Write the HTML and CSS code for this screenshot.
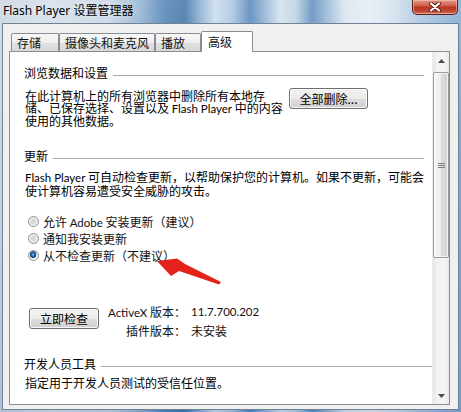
FILE: index.html
```html
<!DOCTYPE html>
<html lang="zh-CN">
<head>
<meta charset="utf-8">
<title>Flash Player 设置管理器</title>
<link rel="stylesheet" href="styles.css">
</head>
<body>
<div class="window">
  <div class="titlebar">
    <span class="title">Flash Player 设置管理器</span>
    <button class="close" aria-label="关闭">
      <svg width="14" height="10" viewBox="0 0 14 10">
        <path d="M3 1.5 L11 8.5 M11 1.5 L3 8.5" stroke="#5a1e16" stroke-width="4" stroke-linecap="round"/>
        <path d="M3 1.5 L11 8.5 M11 1.5 L3 8.5" stroke="#ffffff" stroke-width="2.2" stroke-linecap="round"/>
      </svg>
    </button>
  </div>

  <div class="client">
    <div class="tabs">
      <div class="tab tab-first">存储</div>
      <div class="tab">摄像头和麦克风</div>
      <div class="tab">播放</div>
      <div class="tab active">高级</div>
    </div>

    <div class="panel">
      <div class="content">
        <div class="group-title">浏览数据和设置</div>
        <div class="row">
          <p class="para para-narrow">在此计算机上的所有浏览器中删除所有本地存<br>储、已保存选择、设置以及 <span class="latin">Flash Player</span> 中的内容<br>使用的其他数据。</p>
          <button class="btn btn-wide">全部删除...</button>
        </div>

        <div class="group-title gap-top">更新</div>
        <p class="para para-update"><span class="latin">Flash Player</span> 可自动检查更新，以帮助保护您的计算机。如果不更新，可能会<br>使计算机容易遭受安全威胁的攻击。</p>

        <div class="radios">
          <label class="radio-row"><span class="radio"></span><span>允许 <span class="latin">Adobe</span> 安装更新（建议）</span></label>
          <label class="radio-row"><span class="radio"></span><span>通知我安装更新</span></label>
          <label class="radio-row"><span class="radio checked"></span><span>从不检查更新（不建议）</span></label>
        </div>

        <div class="check">
          <button class="btn btn-check">立即检查</button>
          <div class="versions">
            <span class="label"><span class="latin">ActiveX</span> 版本：</span><span class="latin">11.7.700.202</span>
            <span class="label">插件版本：</span><span>未安装</span>
          </div>
        </div>

        <div class="group-title wide dev-title">开发人员工具</div>
        <p class="para dev-text">指定用于开发人员测试的受信任位置。</p>
      </div>

      <div class="scrollbar">
        <div class="sb-btn">
          <svg width="7" height="4" viewBox="0 0 7 4"><polygon points="3.5,0 7,4 0,4" fill="#4a4a4a"/></svg>
        </div>
        <div class="sb-track">
          <div class="thumb"><span class="grip"></span></div>
        </div>
        <div class="sb-btn">
          <svg width="7" height="4" viewBox="0 0 7 4"><polygon points="0,0 7,0 3.5,4" fill="#4a4a4a"/></svg>
        </div>
      </div>
    </div>
  </div>

  <!-- annotation arrow pointing at the selected option -->
  <svg class="pointer" width="75" height="36" viewBox="0 0 75 36">
    <polygon points="7,9 27,6.5 35,12 71,30 69,32.5 29,19 21,24" fill="#e3221c"/>
  </svg>
</div>
</body>
</html>
```

FILE: styles.css
```css
* {
  box-sizing: border-box;
}

html, body {
  margin: 0;
  padding: 0;
}

body {
  width: 461px;
  height: 412px;
  overflow: hidden;
  font-family: "Noto Sans CJK SC", sans-serif;
  font-size: 12px;
  color: #111;
}

/* Latin runs inside Chinese text use a narrower UI face */
.latin {
  font-family: "Lato", "Noto Sans", sans-serif;
  font-size: 11.5px;
}

/* Aero-style glass frame */
.window {
  position: relative;
  width: 461px;
  height: 412px;
  display: flex;
  flex-direction: column;
  background:
    linear-gradient(180deg, rgba(255,255,255,0.18), rgba(255,255,255,0) 40%, rgba(40,90,150,0.15)),
    linear-gradient(90deg,
      #c6d4e2 0px, #d3dde8 50px, #c4d3e2 110px, #8eb0d0 140px,
      #4a7db2 165px, #3d6fa4 185px, #86acd0 200px, #c9dcec 215px,
      #a6c3de 232px, #4f82b8 250px, #7fa6cd 262px, #d2e0ec 280px,
      #b8cee2 296px, #5888bb 312px, #8fb1d3 326px, #d8e5f0 345px,
      #e4ecf4 370px, #cfdeec 395px, #a7c3de 420px, #7ea6cf 461px);
}

.titlebar {
  height: 23px;
  display: flex;
  align-items: flex-start;
  padding: 0 3px;
}

.title {
  font-family: "Noto Sans", "Noto Sans CJK SC", sans-serif;
  font-size: 12px;
  line-height: 22px;
  color: #000;
  text-shadow: 0 0 6px rgba(255,255,255,0.7);
}

.close {
  margin-left: auto;
  width: 46px;
  height: 15px;
  padding: 0;
  border: 1px solid #5b2219;
  border-top: none;
  border-radius: 0 0 5px 5px;
  background: linear-gradient(180deg, #e3998a 0%, #d0634d 40%, #b93722 50%, #c0462f 80%, #d27a64 100%);
  box-shadow: inset 0 0 0 1px rgba(255,220,210,0.45);
  display: flex;
  align-items: center;
  justify-content: center;
}

.close svg {
  display: block;
}

/* light client surface holding the tab control */
.client {
  flex: 1;
  margin: 0 2px 2px 2px;
  border: 1px solid #6f8296;
  background: #f0f0f0;
  display: flex;
  flex-direction: column;
  padding: 7px 8px 0 6px;
}

.tabs {
  display: flex;
  align-items: flex-end;
  height: 20px;
  padding-left: 2px;
}

.tab {
  height: 18px;
  min-width: 46px;
  padding: 1px 5px 0 5px;
  line-height: 16px;
  border: 1px solid #898c95;
  border-bottom: none;
  border-radius: 2px 2px 0 0;
  background: linear-gradient(180deg, #f8f8f8 0%, #eeeeee 50%, #e0e0e0 51%, #d9d9d9 100%);
  white-space: nowrap;
}

.tab-first {
  min-width: 48px;
}

.tab.active {
  position: relative;
  z-index: 1;
  height: 21px;
  min-width: 52px;
  margin-bottom: -1px;
  padding: 2px 5px 0 6px;
  background: #fff;
}

.panel {
  height: 354px;
  border: 1px solid #898c95;
  background: #fff;
  display: flex;
}

.content {
  flex: 1;
  padding: 13px 8px 0 14px;
  white-space: nowrap;
}

.group-title {
  display: flex;
  align-items: center;
  gap: 5px;
  height: 16px;
  line-height: 16px;
  color: #000;
}

.group-title::after {
  content: "";
  flex: 1;
  margin-top: 4px;
  border-top: 1px solid #a8a8a8;
}

.group-title.wide {
  margin-right: -8px;
}

.gap-top {
  margin-top: 21px;
}

.para {
  margin: 0;
  padding-left: 1px;
  line-height: 12px;
  color: #000;
}

.row {
  display: flex;
  align-items: flex-start;
  gap: 8px;
  margin-top: 7px;
}

.para-narrow {
  width: 257px;
  margin-top: 2px;
}

.para-update {
  margin-top: 7px;
  line-height: 12.5px;
}

.btn {
  height: 21px;
  padding: 0;
  border: 1px solid #707070;
  border-radius: 3px;
  background: linear-gradient(180deg, #f2f2f2 0%, #ebebeb 50%, #dddddd 51%, #cfcfcf 100%);
  box-shadow: inset 0 0 0 1px rgba(255,255,255,0.8);
  font-family: inherit;
  font-size: 12px;
  line-height: 18px;
  color: #000;
  text-align: center;
}

.btn-wide {
  width: 79px;
  flex: none;
}

.btn-check {
  width: 70px;
  margin: 5px 9px 0 5px;
  flex: none;
}

.radios {
  margin-top: 16px;
  padding-left: 4px;
}

.radio-row {
  display: flex;
  align-items: center;
  gap: 4px;
  height: 17px;
  line-height: 17px;
}

.radio {
  width: 11px;
  height: 11px;
  border-radius: 50%;
  border: 1px solid #8e8f8f;
  background: radial-gradient(circle at 50% 50%, #d2d2d2 0, #dedede 2.5px, #f6f6f6 4.5px);
  flex: none;
}

.radio.checked {
  background: radial-gradient(circle at 45% 40%, #9cc2ee 0, #2b68b4 1.6px, #123f7a 3px, #dfe6ee 3.6px, #f6f6f6 4.5px);
}

.check {
  display: flex;
  align-items: flex-start;
  margin-top: 39px;
}

.versions {
  display: grid;
  grid-template-columns: auto auto;
  column-gap: 5px;
  line-height: 18px;
}

.versions .label {
  justify-self: end;
}

.dev-title {
  margin-top: 16px;
}

.dev-text {
  margin-top: 5px;
}

/* vertical scroll bar */
.scrollbar {
  width: 17px;
  display: flex;
  flex-direction: column;
  background: linear-gradient(90deg, #e4e4e4 0%, #f3f3f3 25%, #f4f4f4 75%, #e8e8e8 100%);
  border-left: 1px solid #ededed;
}

.sb-btn {
  height: 17px;
  display: flex;
  align-items: center;
  justify-content: center;
}

.sb-btn svg {
  display: block;
}

.sb-track {
  flex: 1;
}

.thumb {
  height: 186px;
  margin: 3px 0 0 0;
  border: 1px solid #999;
  border-radius: 2px;
  background: linear-gradient(90deg, #f5f5f5 0%, #ececec 45%, #dcdcdc 55%, #d2d2d2 100%);
  box-shadow: inset 0 0 0 1px rgba(255,255,255,0.75);
  display: flex;
  align-items: center;
  justify-content: center;
}

.grip {
  width: 7px;
  height: 5px;
  background: repeating-linear-gradient(180deg, #7c7c7c 0 1px, transparent 1px 2px);
}

.pointer {
  position: absolute;
  left: 150px;
  top: 252px;
}
```
